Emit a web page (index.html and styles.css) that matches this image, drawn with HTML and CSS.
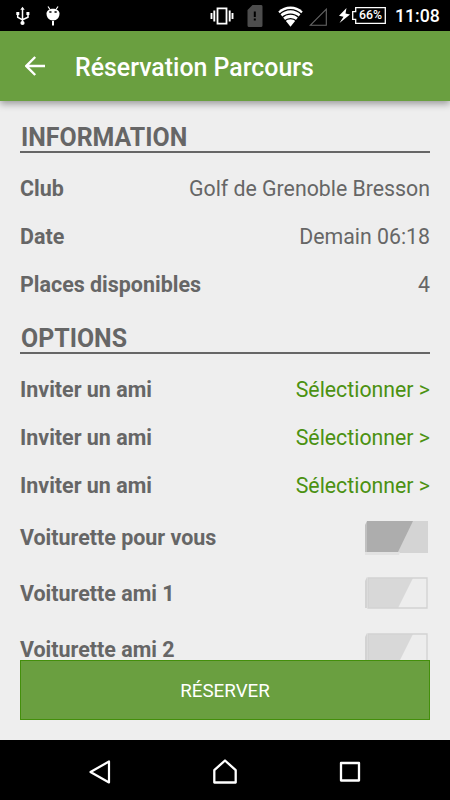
FILE: index.html
```html
<!DOCTYPE html>
<html lang="fr">

<head>
    <meta charset="UTF-8">
    <meta name="viewport" content="width=device-width, initial-scale=1.0">
    <title>Réservation Parcours</title>
    <link rel="stylesheet" href="styles.css">
</head>

<body>
    <div class="status_bar">
        <svg class="ic_usb" width="14" height="20" viewBox="0 0 14 20">
            <path d="M6.5 3v13M1.7 8v3.2l4.8 2.6M12 7.5v3.7l-5.5 2.6" fill="none" stroke="#fff" stroke-width="1.5" />
            <path d="M4.300 3.800L6.500.8l2.200 3zM.3 6h3v3h-3zM10.400 6h3v3h-3z" fill="#fff" />
            <circle cx="6.5" cy="17" r="2.1" fill="#fff" />
        </svg>
        <svg class="ic_droid" width="14" height="21" viewBox="0 0 14 21">
            <path d="M2 .5l2 3M12 .5l-2 3" stroke="#fff" stroke-width="1.2" />
            <path d="M.5 7.500C.5 1 13.500 1 13.500 7.500c0 4-2.500 7-6.500 7s-6.500-3-6.500-7z" fill="#fff" />
            <path d="M3.300 6h2.200M8.500 6h2.200" stroke="#000" stroke-width="1.400" />
            <path d="M7 15v4.500" stroke="#fff" stroke-width="2" />
        </svg>
        <svg class="ic_vibrate" width="24" height="18" viewBox="0 0 24 18">
            <path d="M7.500 1.300h9v15.400h-9z" fill="none" stroke="#fff" stroke-width="1.800" />
            <path d="M4.300 3.500v11M19.700 3.500v11M1.500 6v6M22.500 6v6" stroke="#fff" stroke-width="1.900" />
        </svg>
        <svg class="ic_sim" width="16" height="22" viewBox="0 0 16 22">
            <path d="M5.500 0H14a1.500 1.500 0 0 1 1.500 1.500v19A1.500 1.500 0 0 1 14 22H2a1.500 1.500 0 0 1-1.500-1.500V5z" fill="#4d4d4d" />
            <path d="M7.800 6.500v5.500M7.800 13.500v2" stroke="#000" stroke-width="2" />
        </svg>
        <svg class="ic_wifi" width="25" height="21" viewBox="0 0 25 21">
            <path d="M.3 5.500C7-1.300 18-1.300 24.700 5.500L12.500 20.800z" fill="#fff" />
            <path d="M1.500 8.300C8 2 17 2 23.500 8.300M4 11.700c5-4.700 12-4.700 17 0M6.500 15c3.500-3.300 8.500-3.300 12 0" fill="none" stroke="#000" stroke-width="1.300" />
        </svg>
        <svg class="ic_signal" width="18" height="18" viewBox="0 0 18 18">
            <path d="M1.200 17.300L17.300 1.200v16.100z" fill="none" stroke="#686868" stroke-width="1.100" />
        </svg>
        <svg class="ic_bolt" width="11" height="15" viewBox="0 0 11 15">
            <path d="M7.500 0L0 7.800l4.500.9L.5 15 11 6.500l-4.500-.9z" fill="#fff" />
        </svg>
        <div class="battery">
            <svg width="34" height="17" viewBox="0 0 34 17">
                <path d="M3.700.7h29.600v15.600H3.700v-4H.7V4.700h3z" fill="none" stroke="#fff" stroke-width="1.300" />
            </svg>
            <span class="percent">66%</span>
        </div>
        <span class="clock">11:08</span>
    </div>

    <header class="toolbar">
        <svg class="back" width="20" height="20" viewBox="0 0 20 20">
            <path d="M20 10H2M10.200 1L1.300 10l8.900 9" fill="none" stroke="#fff" stroke-width="2.400" />
        </svg>
        <h1>Réservation Parcours</h1>
    </header>

    <main class="content">
        <h2>INFORMATION</h2>
        <div class="rows">
            <div class="row"><b>Club</b><span>Golf de Grenoble Bresson</span></div>
            <div class="row"><b>Date</b><span>Demain 06:18</span></div>
            <div class="row"><b>Places disponibles</b><span>4</span></div>
        </div>

        <h2 class="options">OPTIONS</h2>
        <div class="rows">
            <div class="row"><b>Inviter un ami</b><a class="select">Sélectionner &gt;</a></div>
            <div class="row"><b>Inviter un ami</b><a class="select">Sélectionner &gt;</a></div>
            <div class="row"><b>Inviter un ami</b><a class="select">Sélectionner &gt;</a></div>
            <div class="row switch_row">
                <b>Voiturette pour vous</b>
                <svg class="switch" width="63" height="34" viewBox="0 0 63 34">
                    <path d="M2 0h61v32H2z" fill="#d4d4d4" />
                    <path d="M0 31h35l-1 3H0z" fill="#e2e2e2" />
                    <path d="M0 4l2-4v31H0z" fill="#c0c0c0" />
                    <path d="M2 0h46L33 31H2z" fill="#adadad" />
                </svg>
            </div>
            <div class="row switch_row">
                <b>Voiturette ami 1</b>
                <svg class="switch" width="63" height="34" viewBox="0 0 63 34">
                    <path d="M0 4l2-4v31H0z" fill="#d3d3d3" />
                    <path d="M3 1h59v30H3z" fill="#ededed" />
                    <path d="M3 1h45L33 31H3z" fill="#d8d8d8" />
                    <path d="M3 1h59v30H3z" fill="none" stroke="#d2d2d2" stroke-width="1.300" />
                </svg>
            </div>
            <div class="row switch_row">
                <b>Voiturette ami 2</b>
                <svg class="switch" width="63" height="34" viewBox="0 0 63 34">
                    <path d="M0 4l2-4v31H0z" fill="#d3d3d3" />
                    <path d="M3 1h59v30H3z" fill="#ededed" />
                    <path d="M3 1h45L33 31H3z" fill="#d8d8d8" />
                    <path d="M3 1h59v30H3z" fill="none" stroke="#d2d2d2" stroke-width="1.300" />
                </svg>
            </div>
        </div>
    </main>

    <button class="book_btn">RÉSERVER</button>

    <nav class="nav_bar">
        <svg width="24" height="26" viewBox="0 0 24 26">
            <path d="M21 2.500v21L2.500 13z" fill="none" stroke="#fff" stroke-width="2.200" stroke-linejoin="round" />
        </svg>
        <svg width="26" height="26" viewBox="0 0 26 26">
            <path d="M13 1.500l10.700 9.700v12.300H2.300V11.200z" fill="none" stroke="#fff" stroke-width="2.300" stroke-linejoin="round" />
        </svg>
        <svg width="24" height="24" viewBox="0 0 24 24">
            <path d="M3 3h18v17.500H3z" fill="none" stroke="#fff" stroke-width="2.300" stroke-linejoin="round" />
        </svg>
    </nav>
</body>

</html>
```

FILE: styles.css
```css
body {
    margin: 0;
    height: 800px;
    display: flex;
    flex-direction: column;
    overflow: hidden;
    background-color: #eeeeee;
    color: #666666;
    font-family: Roboto, "Liberation Sans", sans-serif;
}

.status_bar {
    height: 31px;
    flex: none;
    display: flex;
    align-items: flex-start;
    background-color: #000;
    color: #fff;
}

.ic_usb {
    margin: 6px 0 0 16px;
}

.ic_droid {
    margin: 6px 0 0 16px;
}

.ic_vibrate {
    margin: 7px 0 0 150px;
}

.ic_sim {
    margin: 5px 0 0 13px;
}

.ic_wifi {
    margin: 6px 0 0 15px;
}

.ic_signal {
    margin: 8px 0 0 6px;
}

.ic_bolt {
    margin: 8px 0 0 12px;
}

.battery {
    display: grid;
    margin: 7px 0 0 2px;
}

.battery svg,
.percent {
    grid-area: 1 / 1;
}

.percent {
    padding-left: 7px;
    font-size: 12.3px;
    font-weight: 500;
    line-height: 17px;
}

.clock {
    margin: 5px 0 0 9px;
    font-size: 17.7px;
    font-weight: 500;
    line-height: 23px;
}

.toolbar {
    height: 70px;
    flex: none;
    z-index: 1;
    display: flex;
    align-items: center;
    padding-left: 25px;
    background-color: #6a9f40;
    box-shadow: 0 3px 7px rgba(0, 0, 0, 0.35);
    color: #fff;
}

h1 {
    margin: 3px 0 0 30px;
    font-size: 24.9px;
    font-weight: 500;
    line-height: 32px;
}

.content {
    flex: 1;
    min-height: 0;
    overflow: hidden;
    padding: 0 20px;
}

h2 {
    margin: 0;
    height: 28px;
    padding: 22px 0 0 1px;
    border-bottom: 2px solid #666666;
    font-size: 24.9px;
    font-weight: bold;
    line-height: 30px;
}

.options {
    padding-top: 15px;
}

.rows {
    padding-top: 11px;
}

.row {
    height: 48.33px;
    display: flex;
    align-items: center;
    justify-content: space-between;
    font-size: 21.3px;
    line-height: 20px;
}

.row b {
    font-size: 21.45px;
}

.row b,
.row span,
.row a {
    padding-top: 1px;
}

.select {
    color: #4b9111;
}

.switch_row {
    height: 56px;
}

.switch {
    margin-right: 2px;
}

.book_btn {
    height: 60px;
    flex: none;
    margin: 0 20px 20px;
    padding-top: 2px;
    border: 1px solid #438f0b;
    background-color: #6a9f40;
    color: #fff;
    font-family: inherit;
    font-size: 18.8px;
}

.nav_bar {
    height: 60px;
    flex: none;
    box-sizing: border-box;
    display: flex;
    align-items: center;
    justify-content: space-between;
    padding: 4px 88px 0;
    background-color: #000;
}
```
